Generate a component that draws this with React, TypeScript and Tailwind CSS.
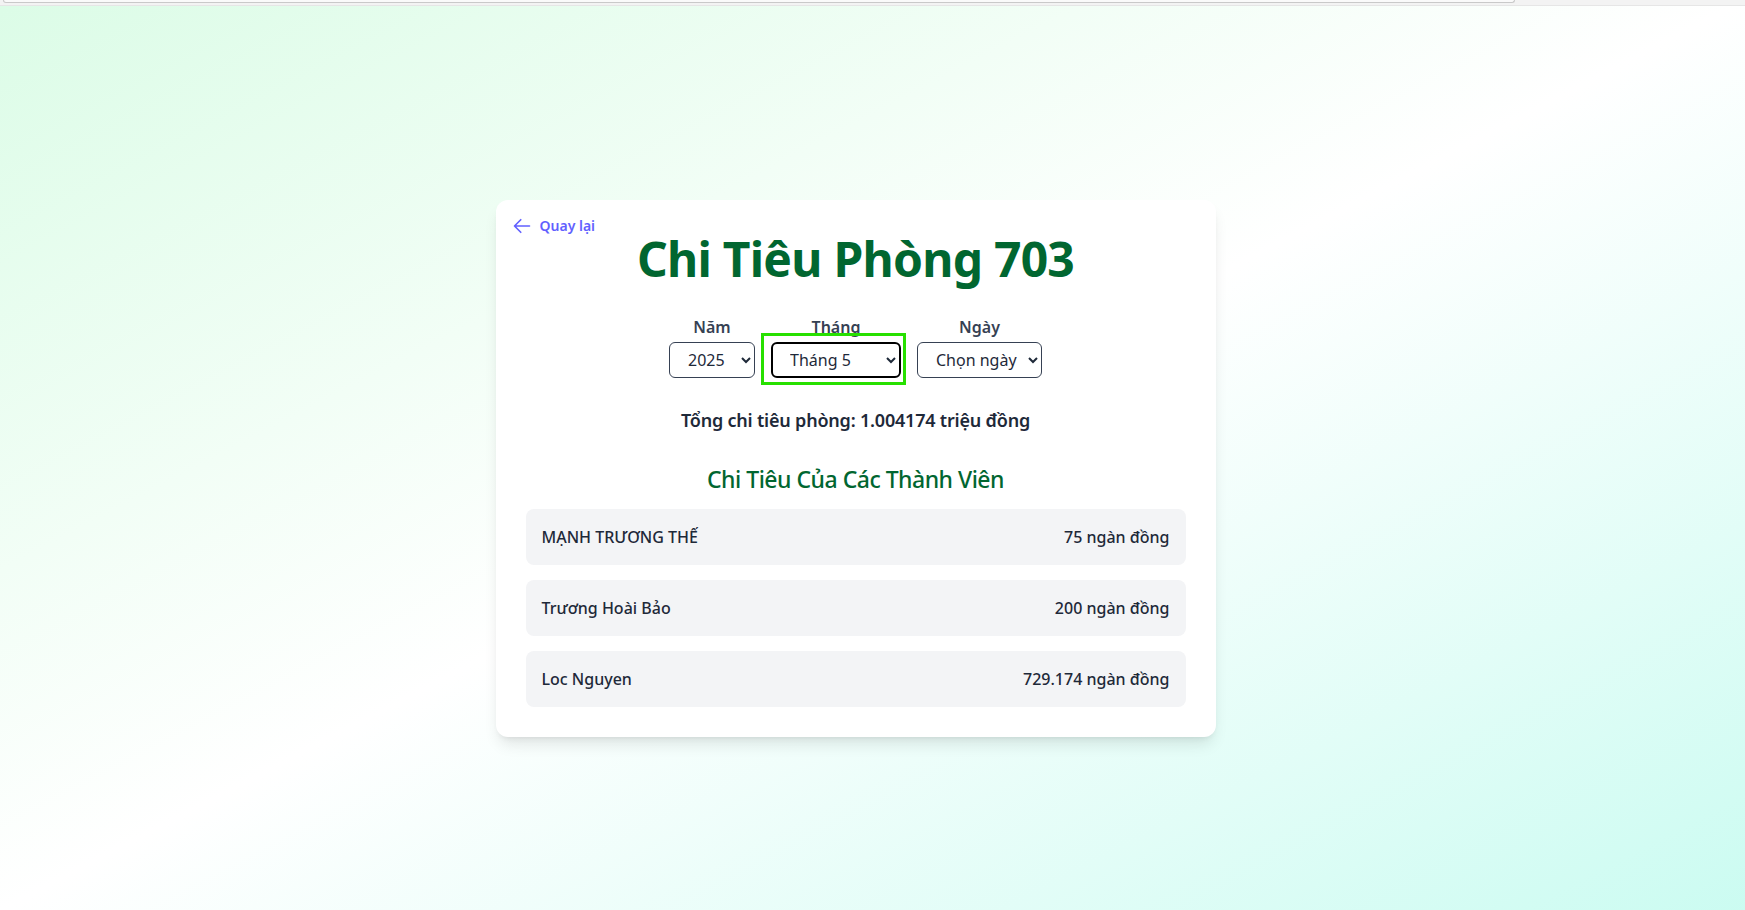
import { useState } from "react";

interface MemberProps {
  name: string;
  amount: string;
}

const members: MemberProps[] = [
  { name: "MẠNH TRƯƠNG THẾ", amount: "75 ngàn đồng" },
  { name: "Trương Hoài Bảo", amount: "200 ngàn đồng" },
  { name: "Loc Nguyen", amount: "729.174 ngàn đồng" },
];

export default function App() {
  const [year, setYear] = useState("2025");
  const [month, setMonth] = useState("5");
  const [day, setDay] = useState("");

  return (
    <div className="min-h-screen bg-gradient-to-br from-green-100 via-white to-teal-100 font-['Segoe_UI','Noto_Sans',sans-serif]">
      <div className="h-[6px] bg-[#f3f3f3] border-b border-[#e6e6e6]">
        <div className="ml-[3px] w-[1512px] h-[3px] rounded-b-[4px] border border-t-0 border-[#c9c9c9] bg-[#fafafa]"></div>
      </div>

      <div className="flex justify-center pt-[194px] pr-[34px] pb-10">
        <div className="relative w-[720px] bg-white rounded-xl shadow-lg px-[30px] pt-[35px] pb-[30px]">
          <a
            href="#"
            className="absolute top-4 left-4 flex items-center gap-2 text-sm font-semibold text-indigo-500"
          >
            <svg
              viewBox="0 0 24 24"
              fill="none"
              stroke="currentColor"
              strokeWidth={2}
              strokeLinecap="round"
              strokeLinejoin="round"
              className="w-5 h-5"
            >
              <path d="M10.5 19.5 3 12m0 0 7.5-7.5M3 12h18" />
            </svg>
            Quay lại
          </a>

          <h1 className="text-5xl leading-none font-bold tracking-[-0.75px] text-green-800 text-center mb-8">
            Chi Tiêu Phòng 703
          </h1>

          <div className="flex justify-center gap-4 mb-7">
            <div className="flex flex-col items-center">
              <label className="text-base font-semibold text-gray-700 mb-[3px]">
                Năm
              </label>
              <select
                value={year}
                onChange={(e) => setYear(e.target.value)}
                className="w-[86px] h-9 border border-gray-700 rounded-md text-base text-gray-800 pl-[14px] pr-1"
              >
                <option value="2024">2024</option>
                <option value="2025">2025</option>
              </select>
            </div>

            <div className="relative flex flex-col items-center">
              <label className="text-base font-semibold text-gray-700 mb-[3px]">
                Tháng
              </label>
              <select
                value={month}
                onChange={(e) => setMonth(e.target.value)}
                className="w-[130px] h-9 border-2 border-black rounded-md text-base text-gray-800 pl-[13px] pr-1"
              >
                {Array.from({ length: 12 }, (_, i) => (
                  <option key={i} value={String(i + 1)}>
                    Tháng {i + 1}
                  </option>
                ))}
              </select>
              <div className="absolute left-[-10px] top-[18px] w-[145px] h-[52px] border-[3px] border-[#27e000] pointer-events-none"></div>
            </div>

            <div className="flex flex-col items-center">
              <label className="text-base font-semibold text-gray-700 mb-[3px]">
                Ngày
              </label>
              <select
                value={day}
                onChange={(e) => setDay(e.target.value)}
                className="w-[125px] h-9 border border-gray-700 rounded-md text-base text-gray-800 pl-[14px] pr-1"
              >
                <option value="">Chọn ngày</option>
                {Array.from({ length: 31 }, (_, i) => (
                  <option key={i} value={String(i + 1)}>
                    {i + 1}
                  </option>
                ))}
              </select>
            </div>
          </div>

          <p className="text-lg font-semibold tracking-[-0.2px] text-gray-800 text-center mb-[29px]">
            Tổng chi tiêu phòng: 1.004174 triệu đồng
          </p>

          <h2 className="text-[23px] leading-8 font-medium tracking-[-0.5px] text-green-800 text-center mb-[14px]">
            Chi Tiêu Của Các Thành Viên
          </h2>

          <div className="flex flex-col gap-[15px]">
            {members.map((m) => (
              <div
                key={m.name}
                className="flex justify-between items-center bg-gray-100 rounded-lg px-4 py-4 text-base font-medium text-gray-800"
              >
                <span>{m.name}</span>
                <span>{m.amount}</span>
              </div>
            ))}
          </div>
        </div>
      </div>
    </div>
  );
}
